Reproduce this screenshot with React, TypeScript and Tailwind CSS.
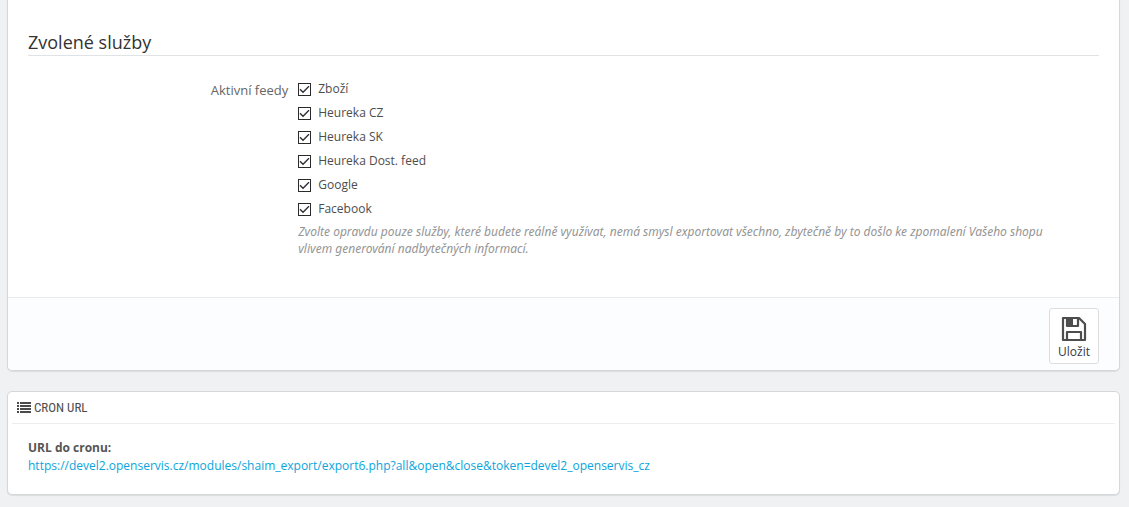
import { useState } from 'react';

const FEEDS = [
    { id: 'zbozi', label: 'Zboží' },
    { id: 'heureka_cz', label: 'Heureka CZ' },
    { id: 'heureka_sk', label: 'Heureka SK' },
    { id: 'heureka_dost', label: 'Heureka Dost. feed' },
    { id: 'google', label: 'Google' },
    { id: 'facebook', label: 'Facebook' },
];

const CRON_URL = 'https://devel2.openservis.cz/modules/shaim_export/export6.php?all&open&close&token=devel2_openservis_cz';

function SaveIcon() {
    return (
        <svg width="26" height="26" viewBox="0 0 26 26" fill="none" stroke="#4d4d4d" strokeWidth="2.200" strokeLinejoin="round" aria-hidden="true">
            <path d="M2 2h16l6 6v16H2z" />
            <path d="M6 24v-8h14v8" />
            <path d="M6 2v8h11V2" />
            <path d="M7 2h5v8H7z" fill="#4d4d4d" stroke="none" />
        </svg>
    );
}

function ListIcon() {
    return (
        <svg width="14" height="12" viewBox="0 0 14 12" fill="#4a4a4a" aria-hidden="true">
            <path d="M0 0h2v2H0zM3 0h11v2H3zM0 3h2v2H0zM3 3h11v2H3zM0 6h2v2H0zM3 6h11v2H3zM0 9h2v2H0zM3 9h11v2H3z" />
        </svg>
    );
}

function FeedCheckbox({ id, label }: { id: string; label: string }) {
    const [checked, setChecked] = useState(true);

    return (
        <div className="flex h-6 items-center gap-[7px]">
            <span className="relative flex size-[13px]">
                <input
                    id={id}
                    type="checkbox"
                    checked={checked}
                    onChange={(e) => setChecked(e.target.checked)}
                    className="peer size-[13px] appearance-none border border-[#2b2b2b] bg-white"
                />
                <svg
                    className="pointer-events-none absolute inset-0 hidden peer-checked:block"
                    width="13"
                    height="13"
                    viewBox="0 0 13 13"
                    fill="none"
                    stroke="#2b2b2b"
                    strokeWidth="1.300"
                    aria-hidden="true"
                >
                    <path d="M2 6.300l3 3 6-6" />
                </svg>
            </span>
            <label htmlFor={id} className="text-xs text-[#4d4d4d]">{label}</label>
        </div>
    );
}

export default function App() {
    return (
        <div className="min-h-screen bg-[#eff1f2] pr-[9px] pb-3 pl-[7px] font-['Open_Sans','Noto_Sans',sans-serif] text-xs text-[#555]">
            {/* Feed settings */}
            <form
                onSubmit={(e) => e.preventDefault()}
                className="rounded-b-[5px] border border-t-0 border-[#d3d8db] bg-white shadow-[0_1px_1px_rgba(0,0,0,0.08)]"
            >
                <div className="px-5 pt-[30px] pb-10">
                    <h2 className="border-b border-[#e0e3e5] text-lg leading-[25px] text-[#333]">Zvolené služby</h2>
                    <div role="group" aria-labelledby="feeds-label" className="-mx-[5px] mt-[21px] flex">
                        <div id="feeds-label" className="w-1/4 px-[5px] pt-[3px] text-right text-[13px] leading-5 text-[#666]">
                            Aktivní feedy
                        </div>
                        <div className="w-3/4 px-[5px]">
                            {FEEDS.map((feed) => (
                                <FeedCheckbox key={feed.id} id={feed.id} label={feed.label} />
                            ))}
                            <p className="pt-[2px] pr-6 font-['Noto_Sans','Open_Sans',sans-serif] leading-[17px] text-[#959595] italic">
                                Zvolte opravdu pouze služby, které budete reálně využívat, nemá smysl exportovat všechno, zbytečně by to došlo ke zpomalení Vašeho shopu vlivem generování nadbytečných informací.
                            </p>
                        </div>
                    </div>
                </div>
                <div className="flex justify-end rounded-b-[5px] border-t border-[#e6edf0] bg-[#fcfdfe] px-5 pt-[10px] pb-[6px]">
                    <button
                        type="submit"
                        className="flex h-14 w-[50px] flex-col items-center rounded-[3px] border border-[#dddddd] bg-white pt-[7px] text-xs text-[#363a41]"
                    >
                        <SaveIcon />
                        <span className="leading-5">Uložit</span>
                    </button>
                </div>
            </form>

            {/* Cron */}
            <section className="mt-5 rounded-[5px] border border-[#d3d8db] bg-white px-1 pb-[19px] shadow-[0_1px_1px_rgba(0,0,0,0.08)]">
                <h3 className="flex h-8 items-center gap-[3px] border-b border-[#eeeeee] px-[5px] font-['Ubuntu_Condensed','Roboto_Condensed','Open_Sans_Condensed','Roboto',sans-serif] text-[13px] text-[#4d4d4d]">
                    <ListIcon />
                    CRON URL
                </h3>
                <div className="px-4 pt-[15px] leading-[18px]">
                    <b className="block">URL do cronu:</b>
                    <a href={CRON_URL} className="break-words text-[#0aa5dc]">{CRON_URL}</a>
                </div>
            </section>
        </div>
    );
}
